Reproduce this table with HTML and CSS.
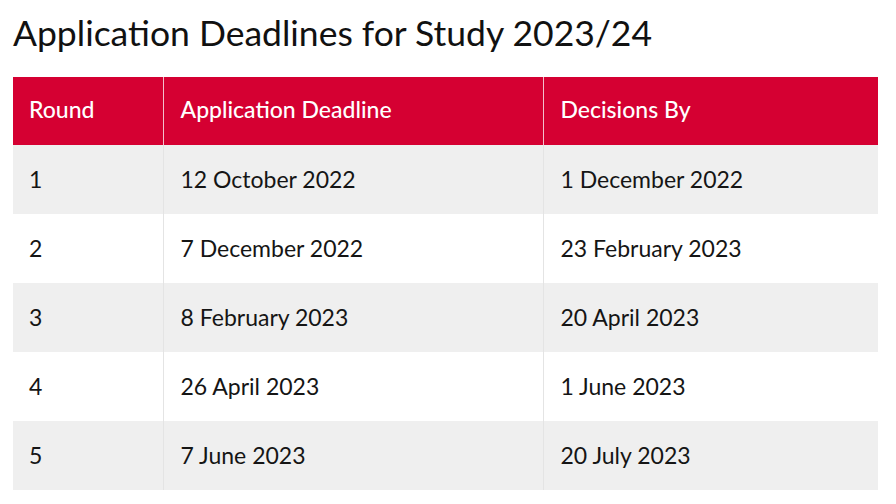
FILE: index.html
```html
<!DOCTYPE html>
<html lang="en">
<head>
<meta charset="utf-8">
<title>Application Deadlines</title>
<link rel="stylesheet" href="styles.css">
</head>
<body>
<main class="page">
  <h1 class="title">Application Deadlines for Study 2023/24</h1>
  <table class="deadlines">
    <colgroup>
      <col class="c1"><col class="c2"><col class="c3">
    </colgroup>
    <thead>
      <tr><th>Round</th><th>Application Deadline</th><th>Decisions By</th></tr>
    </thead>
    <tbody>
      <tr><td>1</td><td>12 October 2022</td><td>1 December 2022</td></tr>
      <tr><td>2</td><td>7 December 2022</td><td>23 February 2023</td></tr>
      <tr><td>3</td><td>8 February 2023</td><td>20 April 2023</td></tr>
      <tr><td>4</td><td>26 April 2023</td><td>1 June 2023</td></tr>
      <tr><td>5</td><td>7 June 2023</td><td>20 July 2023</td></tr>
    </tbody>
  </table>
</main>
</body>
</html>
```
FILE: styles.css
```css
html, body {
  margin: 0;
  padding: 0;
  background: #ffffff;
}
.page {
  padding: 10px 18px 0 13px;
  font-family: Lato, "Open Sans", sans-serif;
  color: #141414;
}
.title {
  margin: 0 0 22px 0;
  font-size: 35.5px;
  line-height: 45px;
  font-weight: 400;
  color: #111111;
}
.deadlines {
  width: 865px;
  border-collapse: collapse;
  table-layout: fixed;
}
.c1 { width: 150px; }
.c2 { width: 380px; }
.c3 { width: 335px; }
.deadlines th,
.deadlines td {
  text-align: left;
  padding: 0 16px 0 17px;
  font-size: 23px;
  border-left: 1px solid #e4e4e4;
}
.deadlines th:first-child,
.deadlines td:first-child {
  border-left: none;
  padding-left: 16px;
}
.deadlines th {
  background: #d50032;
  color: #ffffff;
  font-weight: 500;
  height: 64px;
  padding-bottom: 4px;
  border-left-color: #f3c0cc;
}
.deadlines td {
  height: 67px;
  padding-bottom: 2px;
  font-weight: 400;
  color: #151515;
}
.deadlines tbody tr:nth-child(odd) td {
  background: #efefef;
}
.deadlines tbody tr:nth-child(even) td {
  background: #ffffff;
}
```
